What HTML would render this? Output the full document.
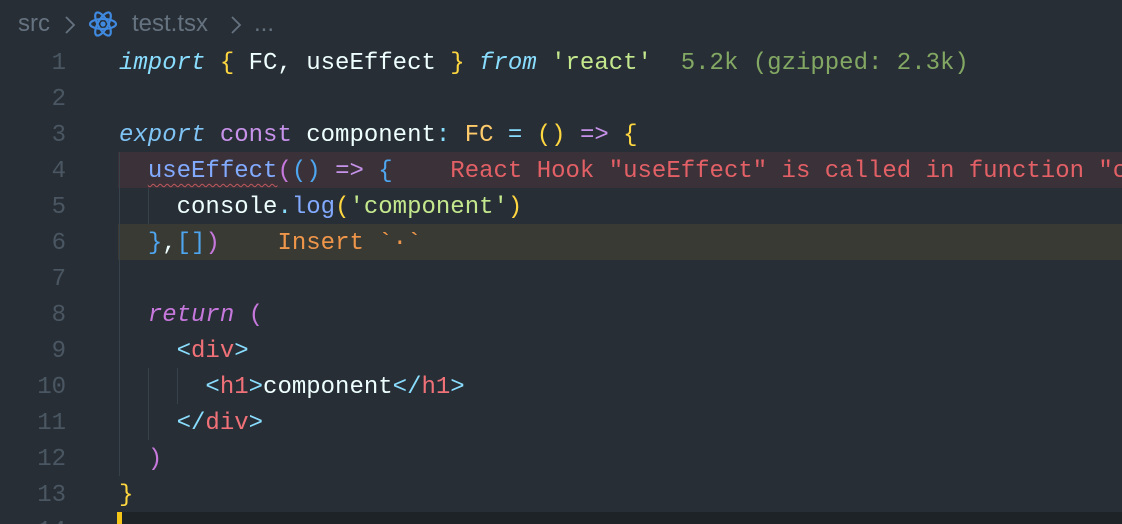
<!DOCTYPE html>
<html><head><meta charset="utf-8"><style>
html,body{margin:0;padding:0;width:1122px;height:524px;overflow:hidden;background:#282e35;position:relative;}
.bc{position:absolute;left:18px;top:10px;font:24px "Liberation Sans",sans-serif;color:#657280;white-space:pre;}
.ln{position:absolute;left:0;width:66px;text-align:right;font:24px "Liberation Mono",monospace;color:#4a5763;line-height:36px;}
.code{position:absolute;left:119px;font:24px "Liberation Mono",monospace;color:#eeffff;line-height:36px;white-space:pre;}
.row{position:absolute;left:118px;width:1004px;height:36px;}
.i{font-style:italic}
.kw{color:#89ddff;font-style:italic}
.pu{color:#c792ea}
.y{color:#ffcb6b}
.yb{color:#ffd740}
.cy{color:#89ddff}
.bl{color:#82aaff}
.gr{color:#c3e88d}
.rd{color:#f07178}
.pk{color:#c678dd}
.br{color:#4fa6f0}
.guide{position:absolute;width:1px;background:#37414a;}
</style></head><body>
<div class="bc">src</div>
<svg style="position:absolute;left:64px;top:15px" width="12" height="20" viewBox="0 0 12 20"><path d="M2 2 L10 10 L2 18" fill="none" stroke="#657280" stroke-width="1.8"/></svg>
<div class="bc" style="left:132px">test.tsx</div>
<svg style="position:absolute;left:230px;top:15px" width="12" height="20" viewBox="0 0 12 20"><path d="M2 2 L10 10 L2 18" fill="none" stroke="#657280" stroke-width="1.8"/></svg>
<div class="bc" style="left:254px">...</div>
<svg style="position:absolute;left:88px;top:9px" width="30" height="30" viewBox="-15 -15 30 30">
<g fill="none" stroke="#3f8ae0" stroke-width="2.2">
<ellipse rx="13" ry="5"/><ellipse rx="13" ry="5" transform="rotate(60)"/><ellipse rx="13" ry="5" transform="rotate(120)"/></g>
<circle r="2.6" fill="#3f8ae0"/></svg>

<div class="row" style="top:152px;background:#3a3238"></div>
<div class="row" style="top:224px;background:#393a34"></div>
<div class="row" style="top:512px;background:#1e2327;height:12px"></div>
<div style="position:absolute;left:117px;top:512px;width:5px;height:12px;background:#f5c518"></div>
<div class="guide" style="left:119px;top:152px;height:324px"></div>
<div class="guide" style="left:148px;top:188px;height:36px"></div>
<div class="guide" style="left:148px;top:368px;height:72px"></div>
<div class="guide" style="left:177px;top:368px;height:36px"></div>

<div class="ln" style="top:46px;height:478px;overflow:hidden">1<br>2<br>3<br>4<br>5<br>6<br>7<br>8<br>9<br>10<br>11<br>12<br>13<br>14</div>
<div class="code" style="top:46px"><span class="kw">import</span> <span class="yb">{</span> FC, useEffect <span class="yb">}</span> <span class="kw">from</span> <span class="gr">'react'</span>  <span style="color:#82a863">5.2k (gzipped: 2.3k)</span>

<span class="kw" style="color:#7fc4f5">export</span> <span class="pu">const</span> component<span class="cy">:</span> <span class="y">FC</span> <span class="cy">=</span> <span class="yb">()</span> <span class="pu">=&gt;</span> <span class="yb">{</span>
  <span class="bl" style="text-decoration:underline wavy #c0585e;text-underline-offset:6px;text-decoration-thickness:1px">useEffect</span><span class="pk">(</span><span class="br">()</span> <span class="pu">=&gt;</span> <span class="br">{</span>    <span style="color:#e36066">React Hook "useEffect" is called in function "c</span>
    console<span class="cy">.</span><span class="bl">log</span><span class="yb">(</span><span class="gr">'component'</span><span class="yb">)</span>
  <span class="br">}</span>,<span class="br">[]</span><span class="pk">)</span>    <span style="color:#f0964a">Insert `·`</span>

  <span class="pk i">return</span> <span class="pk">(</span>
    <span class="cy">&lt;</span><span class="rd">div</span><span class="cy">&gt;</span>
      <span class="cy">&lt;</span><span class="rd">h1</span><span class="cy">&gt;</span>component<span class="cy">&lt;/</span><span class="rd">h1</span><span class="cy">&gt;</span>
    <span class="cy">&lt;/</span><span class="rd">div</span><span class="cy">&gt;</span>
  <span class="pk">)</span>
<span class="yb">}</span></div>
</body></html>
